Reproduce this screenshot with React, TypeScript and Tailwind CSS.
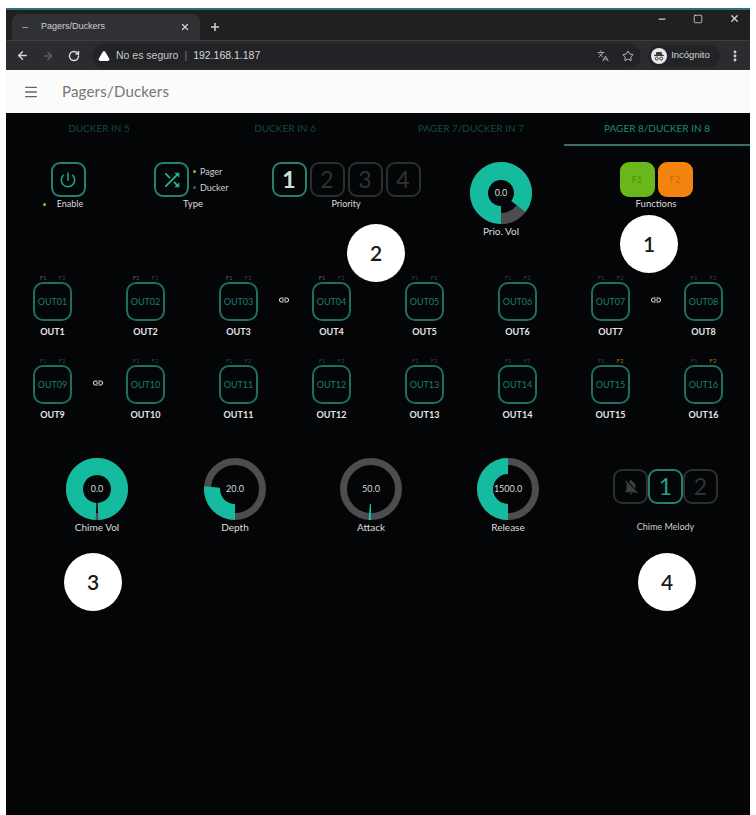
import { ArrowLeft, ArrowRight, EllipsisVertical, Languages, Menu, Minus, Plus, RotateCw, Square, Star, TriangleAlert, X } from 'lucide-react'
import { MdLink, MdNotificationsOff, MdPowerSettingsNew, MdShuffle } from 'react-icons/md'

const TABS = ['DUCKER IN 5', 'DUCKER IN 6', 'PAGER 7/DUCKER IN 7', 'PAGER 8/DUCKER IN 8']

// link icon sits to the right of these outputs
const LINKED = [3, 7, 9]
const OUTPUTS = Array.from({ length: 16 }, (_, i) => i + 1)

// draws one ring sector, angles are clockwise from 6 o'clock
function sector(from: number, to: number, outer: number, inner: number) {
  const pt = (a: number, r: number) => {
    const t = (a * Math.PI) / 180
    return `${(32 - r * Math.sin(t)).toFixed(2)} ${(32 + r * Math.cos(t)).toFixed(2)}`
  }
  const large = to - from > 180 ? 1 : 0
  return `M${pt(from, outer)} A${outer} ${outer} 0 ${large} 1 ${pt(to, outer)} L${pt(to, inner)} A${inner} ${inner} 0 ${large} 0 ${pt(from, inner)} Z`
}

function Knob({ value, label, from = 0, sweep, inner = 15, thickTrack, className = '' }: { value: string; label: string; from?: number; sweep: number; inner?: number; thickTrack?: boolean; className?: string }) {
  return (
    <div className={`flex flex-col items-center ${className}`}>
      <div className="relative w-16 h-16 flex items-center justify-center">
        <svg viewBox="0 0 64 64" className="absolute inset-0 w-16 h-16">
          <circle cx="32" cy="32" r="27.500" fill="none" stroke="#4d4c4e" strokeWidth="7" />
          {thickTrack && <path d={sector(sweep, 360, 31, 20)} fill="#4d4c4e" />}
          <path d={sector(from, sweep, 31, inner)} fill="#14bb9f" />
        </svg>
        <span className="relative text-[9px] text-[#d8d8d8]">{value}</span>
      </div>
      <span className="mt-[1px] text-[10px] leading-none text-[#dddddd]">{label}</span>
    </div>
  )
}

function NumBox({ n, on }: { n: number; on?: boolean }) {
  return (
    <div className={`w-[35px] h-[35px] rounded-[9px] border-2 flex items-center justify-center text-[23px] leading-none ${on ? 'border-[#27806e] text-[#c4e4dc] font-bold' : 'border-[#2c2f2f] text-[#2f3333]'}`}>
      {n}
    </div>
  )
}

function Output({ n }: { n: number }) {
  const code = String(n).padStart(2, '0')
  return (
    <div className="relative flex flex-col items-center">
      <div className="flex gap-[12px] text-[6px] leading-[7px] h-[7px] text-[#3a3d3d]">
        <span className={n <= 4 ? 'text-[#5b5f5f]' : ''}>F1</span>
        <span className={n >= 15 ? 'text-[#a8701c]' : ''}>F2</span>
      </div>
      <div className="w-[39px] h-[39px] mt-[1px] rounded-[10px] border-2 border-[#1f6f60] flex items-center justify-center text-[9px] text-[#1d7f6c]">
        OUT{code}
      </div>
      <span className="mt-[6px] text-[9px] leading-[10px] font-bold text-[#e6e6e6]">OUT{n}</span>
      {LINKED.includes(n) && (
        <MdLink className="absolute top-[20px] -right-[5px] w-3 h-3 text-[#e8e8e8]" />
      )}
    </div>
  )
}

function Badge({ n, className }: { n: number; className: string }) {
  return (
    <div className={`absolute w-[58px] h-[58px] rounded-full bg-white flex items-center justify-center text-[21px] font-semibold text-[#1a1a1a] ${className}`}>
      {n}
    </div>
  )
}

export default function App() {
  return (
    <div className="relative w-[756px] h-[815px] overflow-hidden bg-white pt-2 px-[6px] font-['Lato',sans-serif]">
      {/* Browser chrome */}
      <div className="h-[32px] bg-[#202020] border-t-2 border-[#2b6f80] flex items-end pl-[6px] pr-[6px] text-[#d0d0d0]">
        <div className="w-[188px] h-[26px] rounded-t-lg bg-[#303134] flex items-center pl-[10px] pr-[10px] text-[9px] font-['Liberation_Sans',sans-serif]">
          <span className="w-[6px] h-[1px] bg-[#999999] mr-[13px]" />
          <span className="flex-1">Pagers/Duckers</span>
          <X className="w-[10px] h-[10px]" strokeWidth={3} />
        </div>
        <Plus className="ml-[9px] mb-[7px] w-3 h-3" strokeWidth={3} />
        <div className="ml-auto flex items-center gap-[26px] self-start mt-[3px] pr-[4px]">
          <Minus className="w-[10px] h-[10px]" strokeWidth={3} />
          <Square className="w-[10px] h-[10px]" strokeWidth={2} />
          <X className="w-[11px] h-[11px]" strokeWidth={3} />
        </div>
      </div>
      <div className="h-[30px] bg-[#2b2c2f] border-t border-[#3d3e40] flex items-center pl-[10px] pr-[8px] text-[#d8d8d8] font-['Liberation_Sans',sans-serif]">
        <ArrowLeft className="w-[13px] h-[13px]" strokeWidth={2.5} />
        <ArrowRight className="ml-[13px] w-3 h-3 text-[#66686a]" strokeWidth={2.5} />
        <RotateCw className="ml-[14px] w-3 h-3" strokeWidth={3} />
        <div className="ml-[12px] w-[550px] h-[24px] rounded-full bg-[#222326] flex items-center pl-[6px] pr-[7px] text-[10.5px]">
          <TriangleAlert className="w-3 h-3 fill-white text-white" />
          <span className="ml-[6px] text-[#c8c8c8]">No es seguro</span>
          <span className="mx-[6px] text-[#777777]">|</span>
          <span>192.168.1.187</span>
          <Languages className="ml-auto w-3 h-3 text-[#a8a8a8]" />
          <Star className="ml-[13px] w-3 h-3 text-[#c0c0c0]" />
        </div>
        <div className="ml-[7px] w-[72px] h-[22px] rounded-full bg-[#222326] flex items-center pl-[3px]">
          <div className="w-[16px] h-[16px] rounded-full bg-[#e8e8e8] flex items-center justify-center">
            <svg viewBox="0 0 14 14" className="w-[14px] h-[14px]">
              <path d="M4.500 3h5l1 3h1.500v1H2V6h1.500z" fill="#3a3a3c" />
              <circle cx="4.800" cy="9.500" r="1.500" fill="none" stroke="#3a3a3c" />
              <circle cx="9.200" cy="9.500" r="1.500" fill="none" stroke="#3a3a3c" />
            </svg>
          </div>
          <span className="ml-[4px] text-[9.500px]">Incógnito</span>
        </div>
        <EllipsisVertical className="ml-[8px] w-[14px] h-[14px]" strokeWidth={3} />
      </div>

      {/* App bar */}
      <div className="h-[43px] bg-[#fbfbfb] flex items-center pl-[17px]">
        <Menu className="w-[16px] h-[16px] text-[#666666]" />
        <span className="ml-[23px] text-[15px] text-[#767676] tracking-[0.2px]">Pagers/Duckers</span>
      </div>

      {/* Panel */}
      <div className="h-[702px] bg-[#030507]">
        <div className="grid grid-cols-4 h-[33px]">
          {TABS.map((t, i) => (
            <div key={t} className={`flex items-center justify-center text-[10px] ${i === 3 ? 'border-b-2 border-[#3b6e69] text-[#1f8a76]' : 'text-[#14493f] pb-[2px]'}`}>
              {t}
            </div>
          ))}
        </div>

        {/* Top controls */}
        <div className="flex pt-[16px] h-[108px] items-start">
          <div className="w-[124px] flex flex-col items-center">
            <div className="w-[35px] h-[35px] rounded-[9px] border-2 border-[#27806e] flex items-center justify-center">
              <MdPowerSettingsNew className="w-[20px] h-[20px] text-[#1f9c84]" />
            </div>
            <div className="mt-[2px] flex items-center text-[9px] leading-[10px] text-[#dddddd] -ml-[10px]">
              <span className="w-[3px] h-[3px] rounded-full bg-[#7ec23a] mr-[11px]" />
              Enable
            </div>
          </div>
          <div className="w-[126px] flex flex-col items-center">
            <div className="flex items-center -ml-[1px]">
              <div className="w-[35px] h-[35px] rounded-[9px] border-2 border-[#27806e] flex items-center justify-center">
                <MdShuffle className="w-[22px] h-[22px] text-[#22b597]" />
              </div>
              <div className="ml-[4px] w-[38px] text-[9px] leading-[16px] text-[#cfcfcf]">
                <div className="flex items-center"><span className="w-[3px] h-[3px] rounded-full bg-[#7ec23a] mr-[4px]" />Pager</div>
                <div className="flex items-center"><span className="w-[3px] h-[3px] rounded-full bg-[#3c5f55] mr-[4px]" />Ducker</div>
              </div>
            </div>
            <span className="mt-[2px] text-[9.500px] leading-[10px] text-[#dddddd]">Type</span>
          </div>
          <div className="w-[180px] flex flex-col items-center">
            <div className="flex gap-[3px]">
              <NumBox n={1} on />
              <NumBox n={2} />
              <NumBox n={3} />
              <NumBox n={4} />
            </div>
            <span className="mt-[2px] text-[9px] leading-[10px] text-[#dddddd]">Priority</span>
          </div>
          <Knob value="0.0" label="Prio. Vol" sweep={308} inner={13} thickTrack className="w-[130px] -mt-[1px]" />
          <div className="w-[180px] flex flex-col items-center">
            <div className="flex gap-[3px]">
              <div className="w-[35px] h-[35px] rounded-[9px] bg-[#69b71a] flex items-center justify-center text-[9px] text-[#4d8f12]">F1</div>
              <div className="w-[35px] h-[35px] rounded-[9px] bg-[#f5840f] flex items-center justify-center text-[9px] text-[#c06a0c]">F2</div>
            </div>
            <span className="mt-[2px] text-[9.500px] leading-[10px] text-[#dddddd]">Functions</span>
          </div>
        </div>

        {/* Outputs */}
        <div className="grid grid-cols-8 gap-y-[20px] pt-[20px]">
          {OUTPUTS.map(n => <Output key={n} n={n} />)}
        </div>

        {/* Chime and dynamics */}
        <div className="flex items-start pt-[37px]">
          <Knob value="0.0" label="Chime Vol" from={2.500} sweep={357.500} inner={14} className="w-[182px]" />
          <Knob value="20.0" label="Depth" sweep={95} className="w-[94px]" />
          <Knob value="50.0" label="Attack" sweep={4.500} className="w-[178px]" />
          <Knob value="1500.0" label="Release" sweep={180} className="w-[96px]" />
          <div className="ml-[57px] pt-[12px] flex flex-col items-center">
            <div className="flex">
              <div className="w-[35px] h-[35px] rounded-[9px] border-2 border-[#2c2f2f] flex items-center justify-center">
                <MdNotificationsOff className="w-[18px] h-[18px] text-[#3c3f3f]" />
              </div>
              <div className="w-[35px] h-[35px] rounded-[9px] border-2 border-[#27806e] flex items-center justify-center text-[23px] text-[#27a088]">1</div>
              <div className="w-[35px] h-[35px] rounded-[9px] border-2 border-[#2c2f2f] flex items-center justify-center text-[23px] text-[#2f3333]">2</div>
            </div>
            <span className="mt-[18px] text-[9px] leading-[10px] text-[#cccccc]">Chime Melody</span>
          </div>
        </div>
      </div>

      {/* Numbered callouts */}
      <Badge n={1} className="left-[620px] top-[215px]" />
      <Badge n={2} className="left-[347px] top-[224px]" />
      <Badge n={3} className="left-[64px] top-[553px]" />
      <Badge n={4} className="left-[638px] top-[553px]" />
    </div>
  )
}
